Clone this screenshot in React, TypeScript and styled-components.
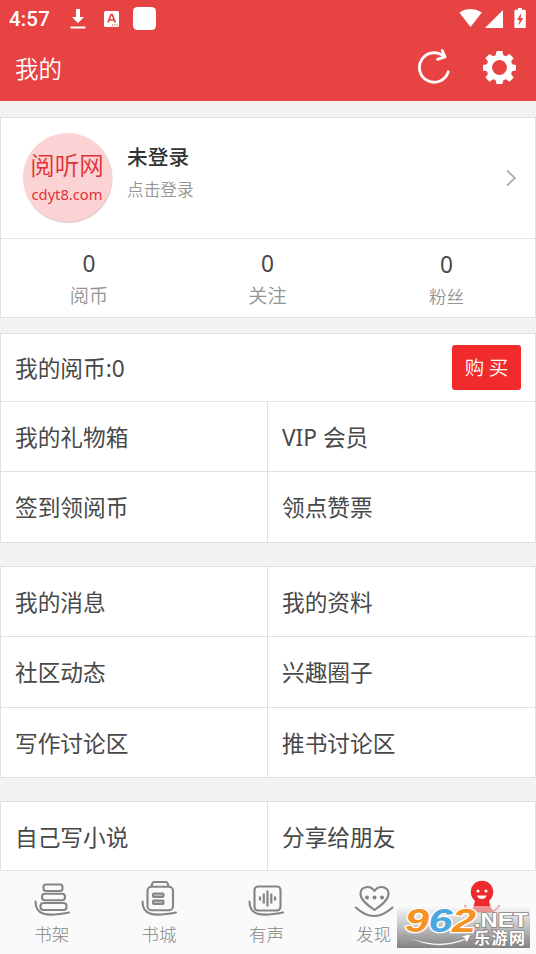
import React from "react";
import styled, { createGlobalStyle } from "styled-components";

const Global = createGlobalStyle`
  * { box-sizing: border-box; }
  body {
    margin: 0;
    background: #f2f2f2;
    font-family: "Noto Sans CJK SC", "Noto Sans", sans-serif;
    color: #484848;
  }
  svg { display: block; }
`;

const Screen = styled.div`
  position: relative;
  display: flex;
  flex-direction: column;
  width: 536px;
  height: 954px;
  overflow: hidden;
  background: #f2f2f2;
`;

const Header = styled.header`
  flex: none;
  height: 101px;
  background: #e84343;
  color: #fff;
`;

const StatusBar = styled.div`
  display: flex;
  align-items: center;
  height: 37px;
  padding: 0 9px;
`;

const Clock = styled.span`
  width: 60px;
  font: 500 20.5px/36px Roboto, sans-serif;
  letter-spacing: 0.15px;
`;

const StatusGroup = styled.div`
  display: flex;
  align-items: center;
`;

const Spacer = styled.div`
  flex: 1;
`;

const TitleBar = styled.div`
  display: flex;
  align-items: center;
  height: 64px;
  padding: 0 20px 4px 15px;
`;

const Title = styled.h1`
  flex: 1;
  margin: 0;
  padding-top: 2px;
  font-size: 23.5px;
  font-weight: 350;
  line-height: 60px;
`;

const Actions = styled.div`
  display: flex;
  align-items: center;
  gap: 32px;
`;

const Content = styled.main`
  display: flex;
  flex-direction: column;
  height: 769px;
  overflow: hidden;
`;

const Card = styled.section<{ $top: number }>`
  flex: none;
  margin-top: ${(p) => p.$top}px;
  background: #fff;
  border: 1px solid #e0e0e0;
`;

const Profile = styled.div`
  display: flex;
  height: 121px;
  padding: 15px 18px 0 22px;
  border-bottom: 1px solid #e5e5e5;
`;

const Avatar = styled.div`
  display: flex;
  flex-direction: column;
  align-items: center;
  width: 89px;
  height: 89px;
  padding: 14px 1px 0 0;
  border-radius: 50%;
  background: #fcd3d4;
  box-shadow: 0.5px 1px 1px #d9c4c4;
  color: #e23235;
  white-space: nowrap;
`;

const AvatarName = styled.span`
  font-size: 24.5px;
  font-weight: 350;
  line-height: 35px;
`;

const AvatarSite = styled.span`
  font: 400 14.7px/24px "Noto Sans", sans-serif;
`;

const ProfileText = styled.div`
  flex: 1;
  padding: 6px 0 0 15px;
`;

const UserName = styled.div`
  font-size: 20.7px;
  font-weight: 500;
  line-height: 34px;
  color: #333;
`;

const UserHint = styled.div`
  font-size: 16.7px;
  font-weight: 350;
  line-height: 33px;
  color: #959595;
`;

const ProfileArrow = styled.div`
  padding-top: 36px;
`;

const Stats = styled.div`
  display: grid;
  grid-template-columns: 176px 181px 177px;
  height: 78px;
  text-align: center;
`;

const Stat = styled.div<{ $small?: boolean }>`
  padding-top: ${(p) => (p.$small ? 9 : 8)}px;
`;

const StatValue = styled.div`
  font-family: "Noto Sans", sans-serif;
  font-size: 22.7px;
  line-height: 34px;
`;

const StatLabel = styled.div<{ $small?: boolean }>`
  margin-top: -1px;
  font-size: ${(p) => (p.$small ? 17.5 : 19.2)}px;
  font-weight: 350;
  line-height: ${(p) => (p.$small ? 29 : 31)}px;
  color: #949494;
`;

const CoinRow = styled.div`
  display: flex;
  align-items: center;
  justify-content: space-between;
  height: 68px;
  padding: 0 14px;
  border-bottom: 1px solid #e5e5e5;
  font-family: "Noto Sans", "Noto Sans CJK SC", sans-serif;
  font-size: 22.7px;
  line-height: 67px;
`;

const CoinText = styled.span`
  padding-top: 2px;
`;

const BuyButton = styled.button`
  width: 69px;
  height: 45px;
  padding: 0 0 2px;
  border: 0;
  border-radius: 3px;
  background: #f12a2c;
  color: #fff;
  font: 350 19.5px "Noto Sans CJK SC", sans-serif;
`;

const MenuGrid = styled.div`
  display: grid;
  grid-template-columns: 267px 1fr;
`;

const MenuCell = styled.div<{ $left: boolean; $line: boolean; $height: number }>`
  height: ${(p) => p.$height}px;
  padding: 1px 14px 0;
  border-right: ${(p) => (p.$left ? "1px solid #e0e0e0" : "0")};
  border-bottom: ${(p) => (p.$line ? "1px solid #e0e0e0" : "0")};
  font-family: "Noto Sans", "Noto Sans CJK SC", sans-serif;
  font-size: 22.7px;
  line-height: 69px;
  white-space: nowrap;
`;

const TabBar = styled.nav`
  position: relative;
  z-index: 1;
  display: grid;
  grid-template-columns: repeat(5, 107.4px);
  height: 84px;
  margin-left: -2px;
  padding-top: 7px;
  border-top: 1px solid #e4e4e4;
  background: #fafafa;
`;

const Tab = styled.div<{ $active?: boolean }>`
  display: flex;
  flex-direction: column;
  align-items: center;
  color: ${(p) => (p.$active ? "#ee2a2c" : "#858585")};
`;

const TabLabel = styled.span`
  font-size: 17.5px;
  font-weight: 300;
  line-height: 32px;
`;

const Watermark = styled.div`
  position: absolute;
  z-index: 2;
  left: 397px;
  top: 906px;
  width: 133px;
  height: 42px;
  background: linear-gradient(rgba(250, 250, 250, 0.5), rgba(175, 175, 175, 0.78) 50%, rgba(120, 120, 120, 0.92));
`;

const DownloadIcon = () => (
  <svg width="16" height="22" viewBox="0 0 16 22" fill="#fff">
    <path d="M6 1h4v8h4l-6 6-6-6h4zM.5 18.5h15v2H.5z" />
  </svg>
);

const KeyboardIcon = () => (
  <svg width="15" height="16" viewBox="0 0 15 16">
    <rect width="15" height="16" rx="1.5" fill="#fff" />
    <path d="M4 11.5 7 3.5h1.2l3 8M5.2 9h4.7" fill="none" stroke="#e84343" strokeWidth="1.7" />
    <path d="M8 13.5h1.2v1H8zm2.2 0h1.2v1h-1.2zm2.2 0h1.2v1h-1.2z" fill="#e84343" />
  </svg>
);

const SquareBadge = styled.div`
  width: 23px;
  height: 23px;
  border-radius: 4.5px;
  background: #fff;
`;

const LeftIcons = styled(StatusGroup)`
  gap: 18px;
  padding-left: 1px;
  & > div { margin-left: -4px; }
`;

const SignalIcons = () => (
  <svg width="69" height="22" viewBox="0 0 69 22" fill="#fff">
    <path d="M1.3 4.4Q12.300-2.300 23.800 4.400L12.500 19z" />
    <path d="M45 2v18H27z" />
    <path fillRule="evenodd" d="M60 0h4v1.8h2.6c.8 0 1.2.4 1.2 1.2v15.800c0 .8-.4 1.200-1.200 1.200h-9c-.8 0-1.200-.4-1.200-1.200V3c0-.8.4-1.200 1.200-1.200H60zm3.300 5L59 12h2.500l-1 5.800 4.700-7.800h-2.600z" />
  </svg>
);

const RefreshIcon = () => (
  <svg width="33" height="36" viewBox="0 0 33 36" fill="none" stroke="#fff" strokeWidth="2.8" strokeLinecap="round" strokeLinejoin="round">
    <path d="M30.2 22.8A14.7 14.7 0 1 1 25.8 7.4M24.2 1.5l2.8 6.4-7.5 2.4" />
  </svg>
);

const GearIcon = () => (
  <svg width="33" height="33" viewBox="0 0 32 32" fill="#fff">
    <path
      fillRule="evenodd"
      d="M13.2 0h5.6l.9 4.2 2.5 1 3.6-2.4 3.9 3.9-2.4 3.6 1 2.5 3.7.8v5.2l-3.8.9-1 2.5 2.5 3.6-4 4-3.6-2.5-2.4 1-.9 3.7h-5.6l-.9-3.7-2.4-1-3.6 2.5-4-4 2.5-3.6-1-2.5L0 18.8v-5.2l3.8-.8 1-2.5-2.5-3.6 4-3.9 3.6 2.4 2.4-1zM16 8.8a7.2 7.2 0 1 0 0 14.4 7.2 7.2 0 0 0 0-14.4z"
    />
  </svg>
);

const ChevronIcon = () => (
  <svg width="11" height="18" viewBox="0 0 11 18" fill="none" stroke="#adadad" strokeWidth="1.8">
    <path d="m1 1.5 8 7.5-8 7.5" />
  </svg>
);

type TabKind = "shelf" | "store" | "audio" | "discover" | "me";

const TabIcon = ({ kind }: { kind: TabKind }) => (
  <svg width="40" height="40" viewBox="0 0 40 40" fill="none" stroke="currentColor" strokeWidth="2.1" strokeLinecap="round" strokeLinejoin="round">
    {(kind === "shelf" || kind === "store" || kind === "audio") && (
      <path d="M3.5 23.5C3.5 37 14 39 37 34.5" />
    )}
    {kind === "shelf" && (
      <>
        <rect x="11.5" y="6.5" width="19" height="6.5" rx="2.5" />
        <rect x="10" y="15.8" width="23" height="6.5" rx="3" />
        <rect x="8.5" y="25" width="26" height="7" rx="3" />
      </>
    )}
    {kind === "store" && (
      <>
        <path d="m12.5 8 1-3q.4-1 1.500-1h12q1.200 0 1.500 1l1 3" />
        <rect x="8.5" y="8.8" width="25.5" height="23.5" rx="4" />
        <rect x="14" y="15.5" width="10.5" height="3.5" rx="1" fill="#bdbdbd" />
        <rect x="14" y="22.5" width="10.5" height="3.5" rx="1" fill="#bdbdbd" />
      </>
    )}
    {kind === "audio" && (
      <>
        <rect x="8.5" y="8.5" width="26" height="24" rx="3.5" />
        <path strokeLinecap="butt" d="M14 18.5v4M17.8 15.5v10M21.5 12.5v16M25.3 15.5v10M29 18.5v4" strokeWidth="2.2" />
      </>
    )}
    {kind === "discover" && (
      <>
        <path d="M1.800 29.500Q20 46.500 38.500 29.500M20.500 32C12 26 6.500 21.500 6.500 15.800 6.500 8.500 16 6.500 20.500 13 25 6.500 34.500 8.500 34.500 15.800 34.500 21.500 29 26 20.500 32z" />
        <g fill="currentColor" stroke="none">
          <circle cx="13" cy="19.5" r="2" />
          <circle cx="20.5" cy="19.5" r="2" />
          <circle cx="28" cy="19.5" r="2" />
        </g>
      </>
    )}
    {kind === "me" && (
      <>
        <path fill="currentColor" stroke="none" d="M14.5 21h13l1 3.5q.5 5 5 10H8.500q4.500-5 5-10z" />
        <circle cx="21" cy="14" r="11.2" fill="currentColor" stroke="none" />
        <path d="M4 28q4 6 10 6M38 28q-4 6-10 6" opacity=".65" />
        <circle cx="17" cy="13" r="1.6" fill="#fff" stroke="none" />
        <circle cx="25" cy="13" r="1.6" fill="#fff" stroke="none" />
        <path d="M16 17.500h9.500q-1 3.500-4.700 3.500T16 17.500z" fill="#fff" stroke="none" />
      </>
    )}
  </svg>
);

const WatermarkLogo = () => (
  <svg width="133" height="42" viewBox="0 0 133 42" overflow="visible">
    <g fontFamily="Liberation Sans, sans-serif" fontWeight="700" stroke="#fff" paintOrder="stroke" strokeLinejoin="round">
      <g fontSize="34" fontStyle="italic" strokeWidth="2.6">
        <text x="8" y="25.5" fill="#f49322" stroke="#fff" textLength="24" lengthAdjust="spacingAndGlyphs">9</text>
        <text x="31.5" y="25.5" fill="#4aa7df" textLength="24" lengthAdjust="spacingAndGlyphs">6</text>
        <text x="55" y="25.5" fill="#f49322" textLength="24" lengthAdjust="spacingAndGlyphs">2</text>
      </g>
      <text x="77" y="20.5" fontSize="19.5" fill="#fff" stroke="#858585" strokeWidth="1.6" textLength="54" lengthAdjust="spacingAndGlyphs">.NET</text>
    </g>
    <path d="M7 29q31 15 61 3.500l-4-2.500 10-2-4 9-1.500-3Q37 47 7 29z" fill="#fff" stroke="#888" strokeWidth=".6" />
    <text x="77" y="37.5" fontFamily="Noto Sans CJK SC, sans-serif" fontSize="16" fontWeight="700" fill="#fff" stroke="#777" strokeWidth="1" paintOrder="stroke" textLength="51">乐游网</text>
  </svg>
);

const Menu = ({ items, rows }: { items: string[]; rows: number[] }) => (
  <MenuGrid>
    {items.map((label, i) => (
      <MenuCell key={label} $left={i % 2 === 0} $line={i < items.length - 2} $height={rows[Math.floor(i / 2)]}>
        {label}
      </MenuCell>
    ))}
  </MenuGrid>
);

const stats = ["阅币", "关注", "粉丝"];

const tabs: { kind: TabKind; label: string }[] = [
  { kind: "shelf", label: "书架" },
  { kind: "store", label: "书城" },
  { kind: "audio", label: "有声" },
  { kind: "discover", label: "发现" },
  { kind: "me", label: "我的" },
];

export default function App() {
  return (
    <Screen>
      <Global />
      <Header>
        <StatusBar>
          <Clock>4:57</Clock>
          <LeftIcons>
            <DownloadIcon />
            <KeyboardIcon />
            <SquareBadge />
          </LeftIcons>
          <Spacer />
          <SignalIcons />
        </StatusBar>
        <TitleBar>
          <Title>我的</Title>
          <Actions>
            <RefreshIcon />
            <GearIcon />
          </Actions>
        </TitleBar>
      </Header>
      <Content>
        <Card $top={16}>
          <Profile>
            <Avatar>
              <AvatarName>阅听网</AvatarName>
              <AvatarSite>cdyt8.com</AvatarSite>
            </Avatar>
            <ProfileText>
              <UserName>未登录</UserName>
              <UserHint>点击登录</UserHint>
            </ProfileText>
            <ProfileArrow>
              <ChevronIcon />
            </ProfileArrow>
          </Profile>
          <Stats>
            {stats.map((label, i) => (
              <Stat key={label} $small={i === 2}>
                <StatValue>0</StatValue>
                <StatLabel $small={i === 2}>{label}</StatLabel>
              </Stat>
            ))}
          </Stats>
        </Card>
        <Card $top={15}>
          <CoinRow>
            <CoinText>我的阅币:0</CoinText>
            <BuyButton>购 买</BuyButton>
          </CoinRow>
          <Menu rows={[70, 70]} items={["我的礼物箱", "VIP 会员", "签到领阅币", "领点赞票"]} />
        </Card>
        <Card $top={23}>
          <Menu rows={[70, 71, 69]} items={["我的消息", "我的资料", "社区动态", "兴趣圈子", "写作讨论区", "推书讨论区"]} />
        </Card>
        <Card $top={23}>
          <Menu rows={[71]} items={["自己写小说", "分享给朋友"]} />
        </Card>
      </Content>
      <TabBar>
        {tabs.map(({ kind, label }) => (
          <Tab key={kind} $active={kind === "me"}>
            <TabIcon kind={kind} />
            <TabLabel>{label}</TabLabel>
          </Tab>
        ))}
      </TabBar>
      <Watermark>
        <WatermarkLogo />
      </Watermark>
    </Screen>
  );
}
